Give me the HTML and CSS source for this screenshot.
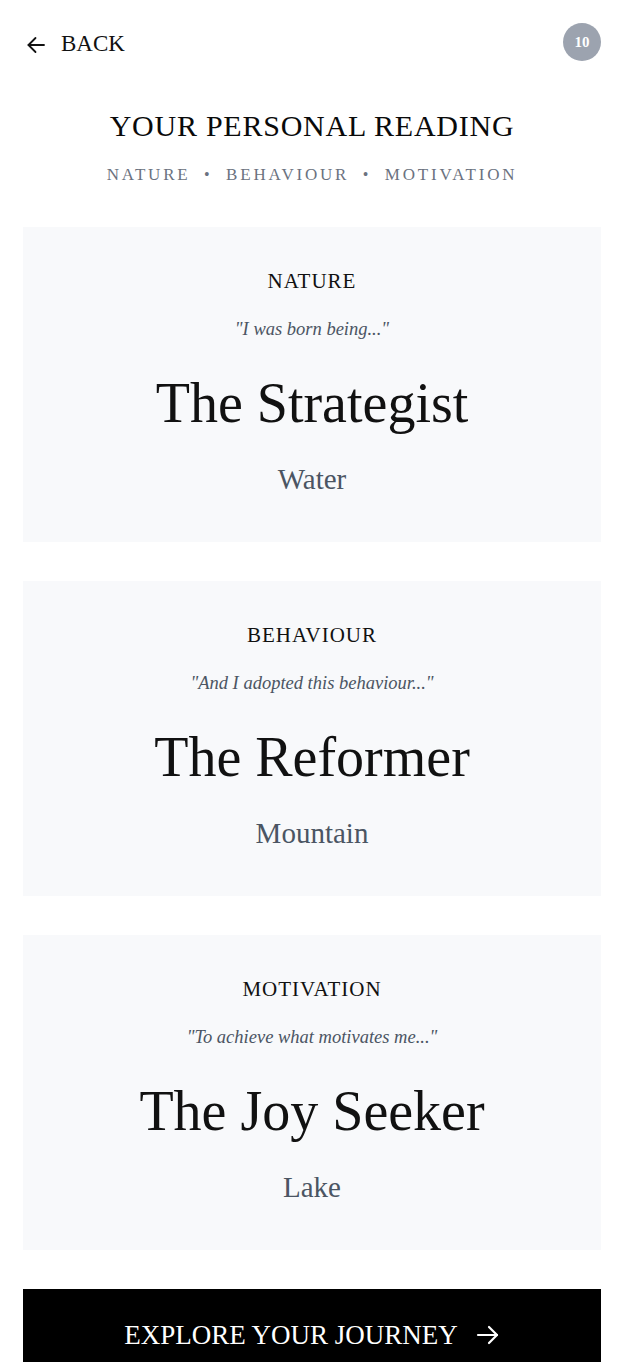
FILE: index.html
```html
<!DOCTYPE html>
<html lang="en">
<head>
  <meta charset="UTF-8" />
  <meta name="viewport" content="width=device-width, initial-scale=1.0"/>
  <title>Your Personal Reading</title>
  <link rel="stylesheet" href="styles.css">
</head>
<body>

<div class="page">
  <header class="top-bar">
    <button class="back-btn">
      <svg class="back-icon" width="18" height="18" viewBox="0 0 18 18" fill="none" stroke="currentColor" stroke-width="1.8" stroke-linecap="round" stroke-linejoin="round">
        <path d="M17 9H1.5"/>
        <path d="M8.5 2L1.5 9l7 7"/>
      </svg>
      <span>BACK</span>
    </button>
    <div class="badge">10</div>
  </header>

  <h1 class="page-title">YOUR PERSONAL READING</h1>
  <div class="subtitle">
    <span>NATURE</span>
    <span class="dot">&bull;</span>
    <span>BEHAVIOUR</span>
    <span class="dot">&bull;</span>
    <span>MOTIVATION</span>
  </div>

  <div class="cards">
    <section class="card">
      <div class="card-label">NATURE</div>
      <div class="card-quote">"I was born being..."</div>
      <div class="card-name">The Strategist</div>
      <div class="card-element">Water</div>
    </section>

    <section class="card">
      <div class="card-label">BEHAVIOUR</div>
      <div class="card-quote">"And I adopted this behaviour..."</div>
      <div class="card-name">The Reformer</div>
      <div class="card-element">Mountain</div>
    </section>

    <section class="card">
      <div class="card-label">MOTIVATION</div>
      <div class="card-quote">"To achieve what motivates me..."</div>
      <div class="card-name">The Joy Seeker</div>
      <div class="card-element">Lake</div>
    </section>
  </div>

  <button class="explore-btn">
    <span>EXPLORE YOUR JOURNEY</span>
    <svg width="24" height="20" viewBox="0 0 24 20" fill="none" stroke="currentColor" stroke-width="2.2" stroke-linecap="round" stroke-linejoin="round">
      <path d="M2 10h19"/>
      <path d="M13 2l8 8-8 8"/>
    </svg>
  </button>
</div>

</body>
</html>
```

FILE: styles.css
```css
body {
  margin: 0;
  background-color: #fff;
  font-family: "Liberation Serif", "Times New Roman", serif;
  color: #111;
}

.page {
  padding: 0 21px 0 23px;
}

.top-bar {
  display: flex;
  align-items: center;
  justify-content: space-between;
  padding-top: 23px;
  height: 38px;
}

.back-btn {
  display: flex;
  align-items: center;
  gap: 16px;
  margin: 4px 0 0 4px;
  padding: 0;
  background: none;
  border: none;
  font-family: inherit;
  font-size: 23px;
  color: #111;
  cursor: pointer;
}

.back-icon {
  margin-top: 1px;
}

.badge {
  width: 38px;
  height: 38px;
  border-radius: 50%;
  background-color: #9ca3af;
  color: #fff;
  font-size: 15px;
  font-weight: bold;
  display: flex;
  align-items: center;
  justify-content: center;
}

.page-title {
  margin: 45px 0 0;
  font-size: 30px;
  font-weight: normal;
  line-height: 40px;
  letter-spacing: 0.75px;
  text-align: center;
  color: #0a0a0a;
}

.subtitle {
  margin-top: 17px;
  display: flex;
  justify-content: center;
  gap: 15px;
  font-size: 17px;
  line-height: 24px;
  letter-spacing: 2.8px;
  color: #6b7280;
}

.subtitle .dot {
  margin: 0 1.5px 0 -1.5px;
  font-size: 16px;
  letter-spacing: 0;
}

.cards {
  margin-top: 40px;
  display: flex;
  flex-direction: column;
  gap: 39px;
}

.card {
  background-color: #f8f9fb;
  padding: 40px 20px 45px;
  text-align: center;
}

.card-label {
  font-size: 21px;
  line-height: 28px;
  letter-spacing: 1px;
  color: #111;
}

.card-quote {
  margin-top: 22px;
  font-size: 18.5px;
  line-height: 24px;
  font-style: italic;
  color: #4b5563;
}

.card-name {
  margin-top: 30px;
  font-size: 56px;
  line-height: 64px;
  color: #111;
}

.card-element {
  margin-top: 26px;
  font-size: 29px;
  line-height: 36px;
  color: #4b5563;
}

.explore-btn {
  margin-top: 39px;
  width: 100%;
  display: flex;
  align-items: center;
  justify-content: center;
  gap: 18px;
  padding: 29px 0;
  background-color: #000;
  color: #fff;
  border: none;
  font-family: inherit;
  font-size: 27px;
  line-height: 34px;
  cursor: pointer;
}
```
